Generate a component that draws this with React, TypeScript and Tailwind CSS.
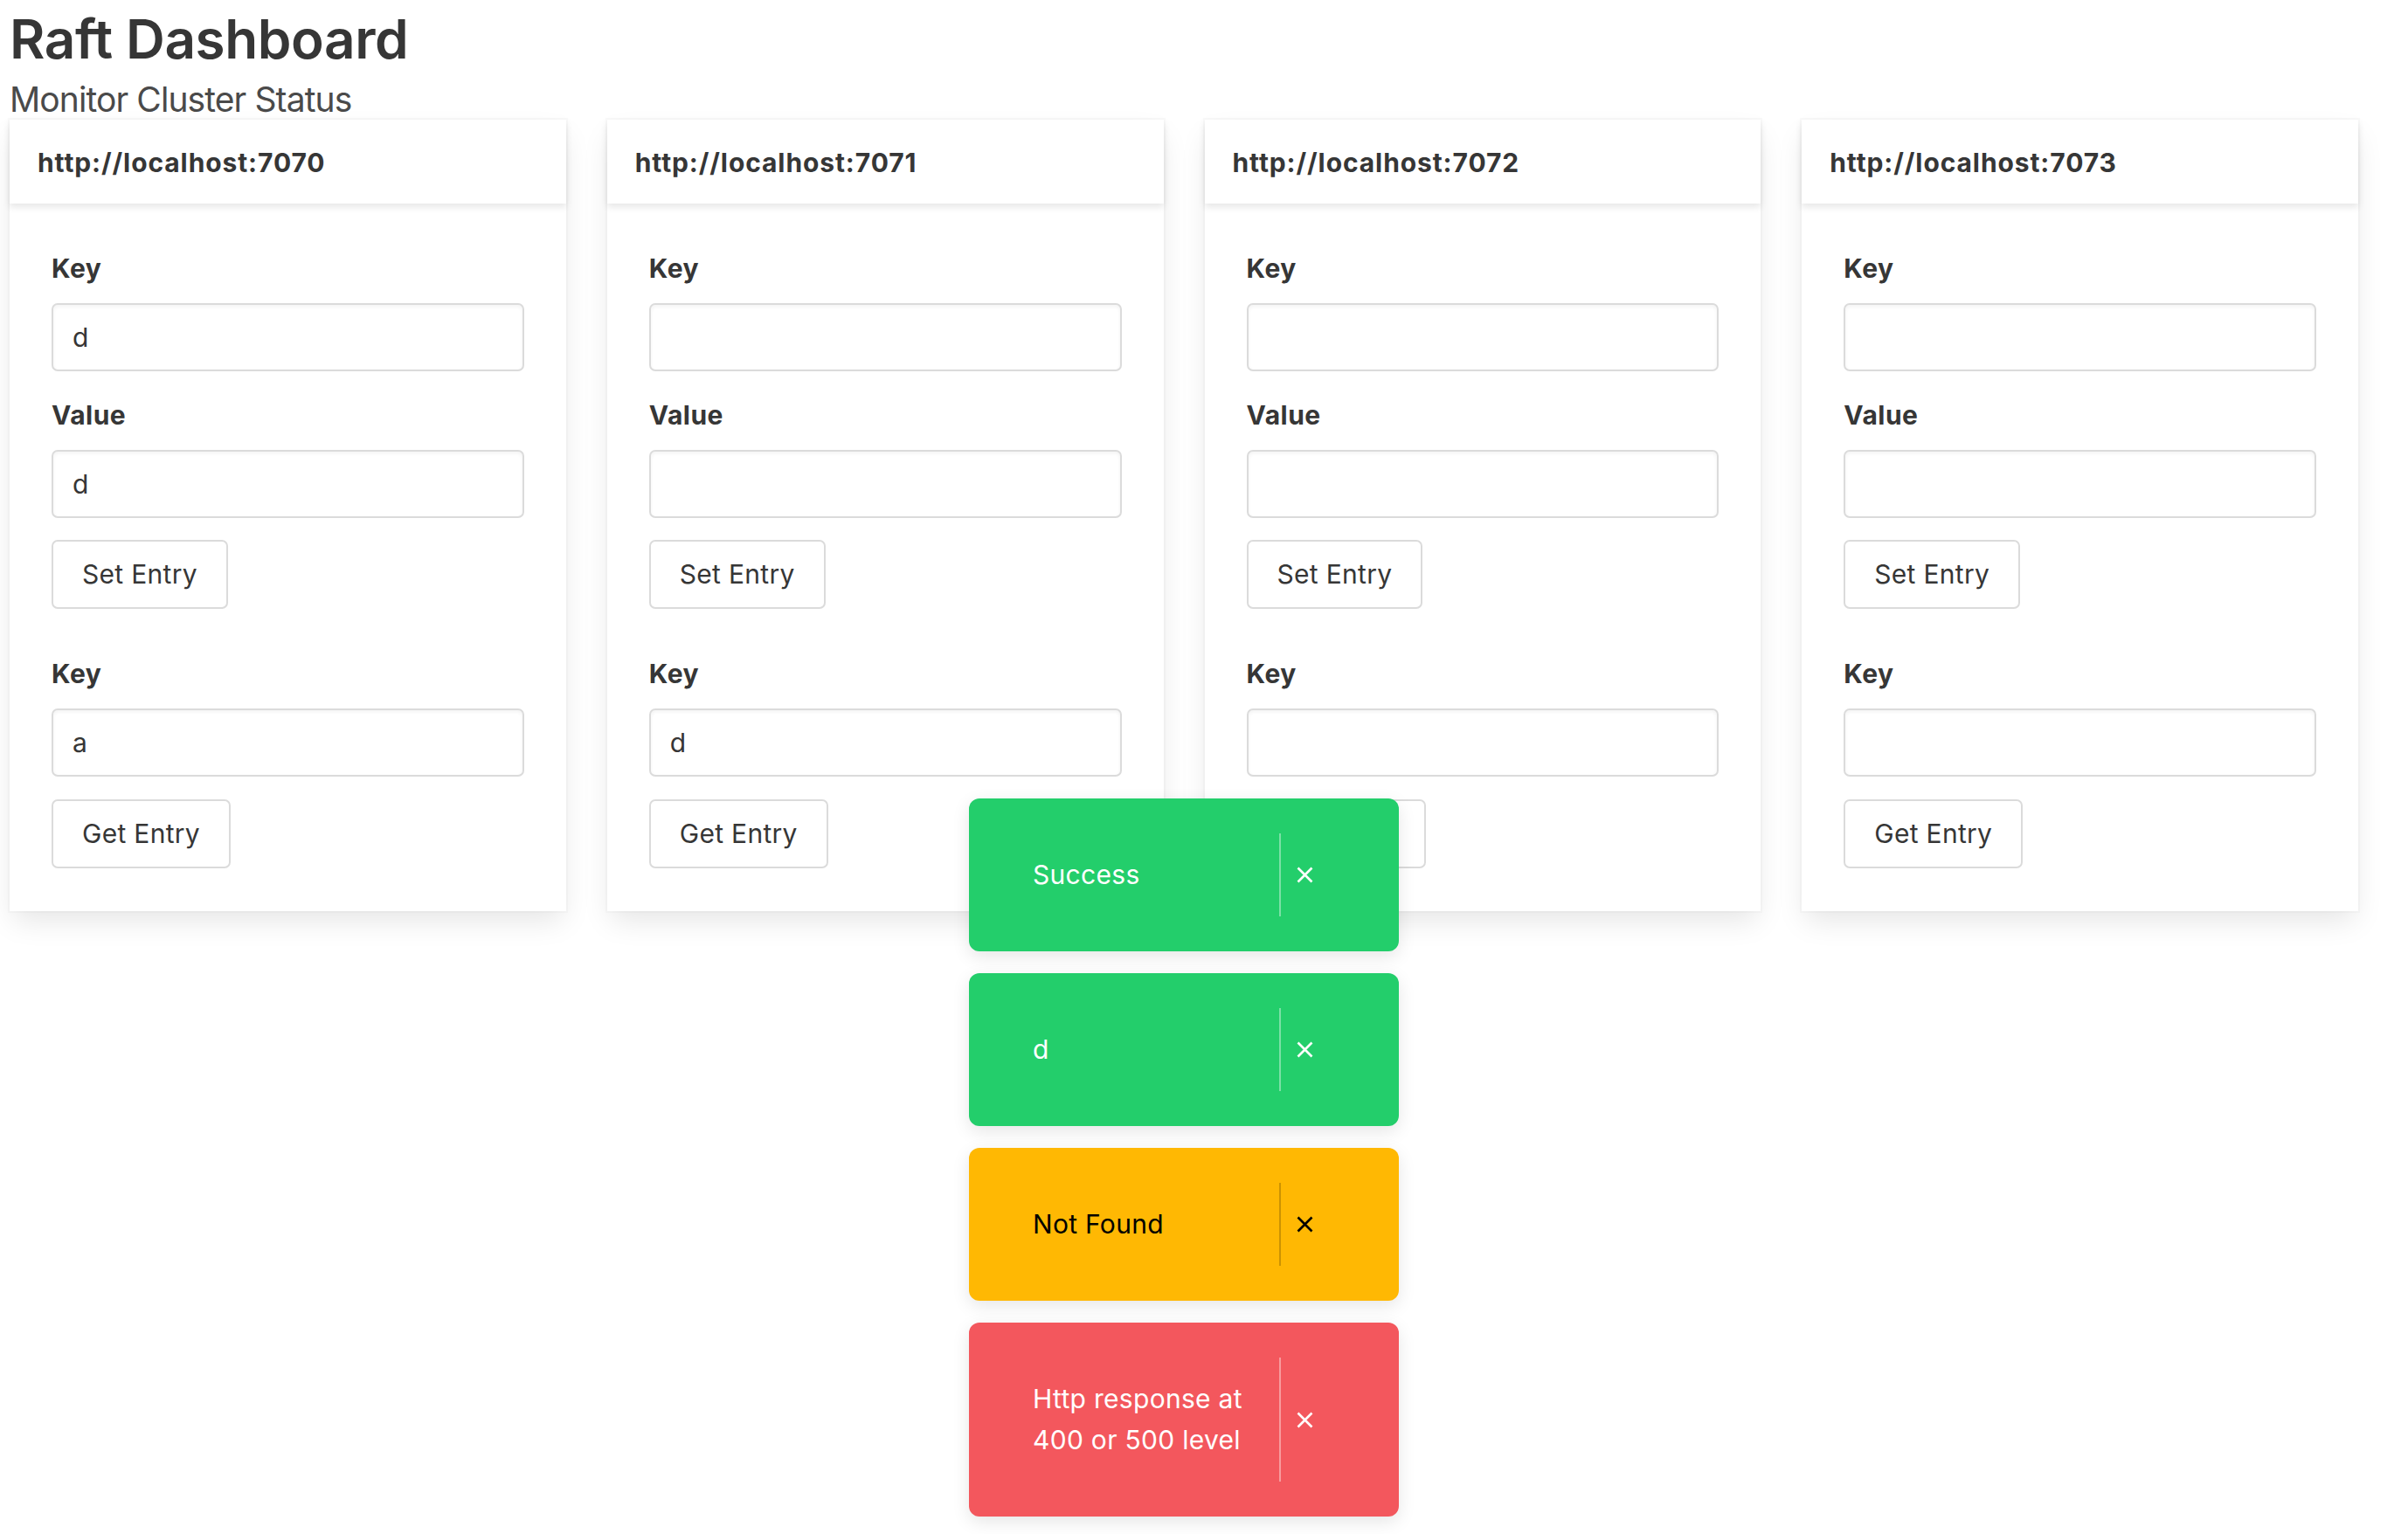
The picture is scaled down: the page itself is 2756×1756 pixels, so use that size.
import React from "react";

type CardData = {
  url: string;
  setKey: string;
  setValue: string;
  getKey: string;
};

const cards: CardData[] = [
  { url: "http://localhost:7070", setKey: "d", setValue: "d", getKey: "a" },
  { url: "http://localhost:7071", setKey: "", setValue: "", getKey: "d" },
  { url: "http://localhost:7072", setKey: "", setValue: "", getKey: "" },
  { url: "http://localhost:7073", setKey: "", setValue: "", getKey: "" },
];

function Label({ children }: { children: React.ReactNode }) {
  return (
    <label className="block text-[30px] font-bold leading-[46px] tracking-[0.5px] text-[#363636] mb-[17px]">
      {children}
    </label>
  );
}

function Input({ value }: { value: string }) {
  return (
    <input
      type="text"
      defaultValue={value}
      className="block h-[78px] w-full rounded-[7px] border-2 border-[#dbdbdb] bg-white pl-[22px] pr-[22px] text-[30px] text-[#363636] shadow-[inset_0_2px_4px_rgba(10,10,10,0.05)] outline-none"
    />
  );
}

function Button({ children }: { children: React.ReactNode }) {
  return (
    <button className="flex h-[79px] items-center rounded-[7px] border-2 border-[#dbdbdb] bg-white px-[33px] text-[30px] tracking-[0.3px] text-[#363636]">
      {children}
    </button>
  );
}

function NodeCard({ data }: { data: CardData }) {
  return (
    <div className="bg-white shadow-[0_15px_31px_-4px_rgba(10,10,10,0.1),0_0_0_2px_rgba(10,10,10,0.02)]">
      <div className="relative z-10 flex h-[96px] items-center bg-white pl-[32px] shadow-[0_4px_8px_rgba(10,10,10,0.1)]">
        <p className="mt-[2px] text-[30px] font-bold leading-[46px] tracking-[0.9px] text-[#363636]">{data.url}</p>
      </div>
      <div className="px-[48px] pt-[51px] pb-[49px]">
        <div className="mb-[27px]">
          <Label>Key</Label>
          <Input value={data.setKey} />
        </div>
        <div>
          <Label>Value</Label>
          <Input value={data.setValue} />
        </div>
        <div className="mt-[25px]">
          <Button>Set Entry</Button>
        </div>
        <div className="mt-[51px]">
          <Label>Key</Label>
          <Input value={data.getKey} />
        </div>
        <div className="mt-[26px]">
          <Button>Get Entry</Button>
        </div>
      </div>
    </div>
  );
}

type ToastData = {
  text: string;
  bg: string;
  fg: string;
  divider: string;
};

function CloseIcon({ color }: { color: string }) {
  return (
    <svg width="19" height="19" viewBox="0 0 19 19" fill="none">
      <path d="M1.5 1.5 L17.5 17.5 M17.5 1.5 L1.5 17.5" stroke={color} strokeWidth="2.6" strokeLinecap="butt" />
    </svg>
  );
}

function Toast({ t }: { t: ToastData }) {
  return (
    <div className={`flex w-[492px] items-stretch rounded-[12px] py-[40px] pl-[73px] pr-[98px] shadow-[0_6px_20px_rgba(0,0,0,0.1)] ${t.bg}`}>
      <div className={`flex flex-1 items-center py-[24px] pr-[20px] text-[30px] leading-[47px] tracking-[0.3px] ${t.fg}`}>
        {t.text}
      </div>
      <div className={`w-[2px] ${t.divider}`} />
      <div className="flex items-center pl-[18px]">
        <CloseIcon color={t.fg === "text-black" ? "#000" : "#fff"} />
      </div>
    </div>
  );
}

const toasts: ToastData[] = [
  { text: "Success", bg: "bg-[#23ce6b]", fg: "text-white", divider: "bg-white/40" },
  { text: "d", bg: "bg-[#23ce6b]", fg: "text-white", divider: "bg-white/40" },
  { text: "Not Found", bg: "bg-[#ffb803]", fg: "text-black", divider: "bg-black/20" },
  { text: "Http response at 400 or 500 level", bg: "bg-[#f3575d]", fg: "text-white", divider: "bg-white/40" },
];

export default function App() {
  return (
    <div className="relative min-h-[1756px] bg-white px-[11px] pt-[10px] font-[Inter,sans-serif]">
      <h1 className="text-[62px] font-semibold leading-[70px] tracking-[-0.4px] text-[#363636]">Raft Dashboard</h1>
      <h2 className="mt-[14px] text-[39px] leading-[40px] tracking-[-0.9px] text-[#4a4a4a]">Monitor Cluster Status</h2>
      <div className="mt-[3px] grid w-[2688px] grid-cols-4 items-start gap-[47px]">
        {cards.map((c) => (
          <NodeCard key={c.url} data={c} />
        ))}
      </div>
      <div className="absolute left-[1109px] top-[914px] z-20 flex flex-col gap-[25px]">
        {toasts.map((t, i) => (
          <Toast key={i} t={t} />
        ))}
      </div>
    </div>
  );
}
